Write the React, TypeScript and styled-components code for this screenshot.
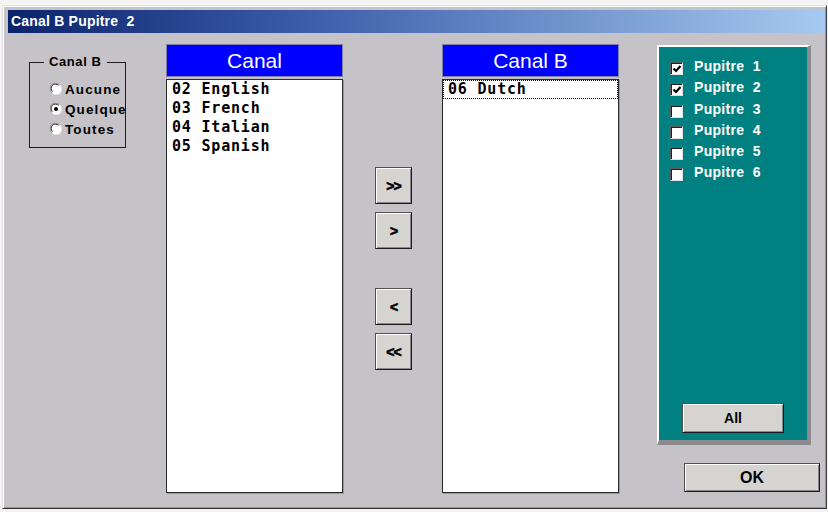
import React, { useState } from "react";
import styled, { createGlobalStyle } from "styled-components";

const GlobalStyle = createGlobalStyle`
  html, body {
    margin: 0;
    padding: 0;
    background: #f4f4f2;
  }
  * {
    box-sizing: border-box;
  }
`;

const sourceChannels = ["02 English", "03 French", "04 Italian", "05 Spanish"];
const targetChannels = ["06 Dutch"];
const modes = ["Aucune", "Quelque", "Toutes"];
const desks = [1, 2, 3, 4, 5, 6];

const Radio: React.FC<{ checked?: boolean }> = ({ checked }) => (
  <svg width="12" height="12" viewBox="0 0 12 12">
    <circle cx="6" cy="6" r="5.5" fill="#fff" />
    <path d="M1.6 9.4 A5 5 0 0 1 9.4 1.6" fill="none" stroke="#808080" strokeWidth="1" />
    <path d="M2.4 8.6 A4 4 0 0 1 8.6 2.4" fill="none" stroke="#303030" strokeWidth="1" />
    <path d="M10.4 2.6 A5 5 0 0 1 2.6 10.4" fill="none" stroke="#e8e8e8" strokeWidth="1" />
    {checked && <circle cx="6" cy="6" r="2" fill="#000" />}
  </svg>
);

const App: React.FC = () => {
  const [mode, setMode] = useState("Quelque");
  const [checked, setChecked] = useState<number[]>([1, 2]);

  const toggleDesk = (n: number) => {
    setChecked((prev) => (prev.includes(n) ? prev.filter((d) => d !== n) : [...prev, n]));
  };

  return (
    <>
      <GlobalStyle />
      <Window>
        <TitleBar>Canal B Pupitre  2</TitleBar>
        <Body>
          <GroupBox>
            <GroupLegend>Canal B</GroupLegend>
            <RadioList>
              {modes.map((m) => (
                <RadioRow key={m} onClick={() => setMode(m)}>
                  <Radio checked={mode === m} />
                  <span>{m}</span>
                </RadioRow>
              ))}
            </RadioList>
          </GroupBox>

          <ChannelColumn $first>
            <ChannelHeader>Canal</ChannelHeader>
            <ChannelList>
              {sourceChannels.map((c) => (
                <ChannelItem key={c}>{c}</ChannelItem>
              ))}
            </ChannelList>
          </ChannelColumn>

          <MoveColumn>
            <MoveButton>&gt;&gt;</MoveButton>
            <MoveButton>&gt;</MoveButton>
            <MoveButton $spaced>&lt;</MoveButton>
            <MoveButton>&lt;&lt;</MoveButton>
          </MoveColumn>

          <ChannelColumn>
            <ChannelHeader>Canal B</ChannelHeader>
            <ChannelList>
              {targetChannels.map((c) => (
                <ChannelItem key={c} $focused>
                  {c}
                </ChannelItem>
              ))}
            </ChannelList>
          </ChannelColumn>

          <RightColumn>
            <DeskPanel>
              <DeskList>
                {desks.map((n) => (
                  <DeskRow key={n} onClick={() => toggleDesk(n)}>
                    <CheckBox>
                      {checked.includes(n) && (
                        <svg width="10" height="10" viewBox="0 0 10 10">
                          <path d="M1.5 4.5 L4 7 L8.5 2" fill="none" stroke="#000" strokeWidth="2.2" />
                        </svg>
                      )}
                    </CheckBox>
                    <DeskLabel>{`Pupitre  ${n}`}</DeskLabel>
                  </DeskRow>
                ))}
              </DeskList>
              <AllButton onClick={() => setChecked(desks)}>All</AllButton>
            </DeskPanel>
            <OkButton>OK</OkButton>
          </RightColumn>
        </Body>
      </Window>
    </>
  );
};

const Window = styled.div`
  margin: 5px 0 0 2px;
  width: 825px;
  height: 504px;
  background: #c5c3c7;
  border: 1px solid;
  border-color: #e2e0e4 #404040 #303030 #e2e0e4;
  box-shadow: inset 1px 1px #ffffff, inset -1px -1px #9a989c;
  padding: 4px 1px 2px 5px;
  display: flex;
  flex-direction: column;
`;

const TitleBar = styled.div`
  height: 23px;
  line-height: 23px;
  padding-left: 3px;
  background: linear-gradient(to right, #0a246a 0%, #3a5aa8 35%, #a6caf0 100%);
  color: #fff;
  font-family: "Liberation Sans", Arial, sans-serif;
  font-weight: bold;
  font-size: 14px;
  letter-spacing: 0.2px;
  white-space: pre;
`;

const Body = styled.div`
  display: flex;
  align-items: flex-start;
  flex: 1;
`;

const GroupBox = styled.fieldset`
  margin: 22px 0 0 21px;
  width: 97px;
  height: 93px;
  padding: 0;
  border: 1px solid #1c1c1c;
  min-width: 0;
`;

const GroupLegend = styled.legend`
  margin-left: 14px;
  padding: 0 5px;
  font-family: "Liberation Sans", Arial, sans-serif;
  font-weight: bold;
  font-size: 13px;
  line-height: 14px;
  letter-spacing: 0.6px;
  color: #000;
`;

const RadioList = styled.div`
  margin-top: 10px;
  padding-left: 20px;
  overflow: hidden;
  white-space: nowrap;
`;

const RadioRow = styled.div`
  display: flex;
  align-items: center;
  gap: 3px;
  height: 20px;
  font-family: "Liberation Sans", Arial, sans-serif;
  font-weight: bold;
  font-size: 13.5px;
  letter-spacing: 1.1px;
  color: #000;
  cursor: default;

  svg {
    flex-shrink: 0;
  }
`;

const ChannelColumn = styled.div<{ $first?: boolean }>`
  margin: 11px 0 0 ${(p) => (p.$first ? 40 : 30)}px;
  width: 177px;
  display: flex;
  flex-direction: column;
  gap: 2px;
`;

const ChannelHeader = styled.div`
  height: 33px;
  line-height: 31px;
  background: #0000ff;
  border: 1px solid #8080a8;
  color: #fff;
  text-align: center;
  font-family: "Liberation Sans", Arial, sans-serif;
  font-size: 21px;
`;

const ChannelList = styled.div`
  height: 414px;
  background: #fff;
  border: 1px solid #2a2a2a;
  box-shadow: 1px 1px 0 #9a989c;
`;

const ChannelItem = styled.div<{ $focused?: boolean }>`
  height: 19px;
  line-height: 19px;
  padding-left: 5px;
  font-family: "DejaVu Sans Mono", "Liberation Mono", monospace;
  font-weight: bold;
  font-size: 15px;
  letter-spacing: 0.8px;
  color: #000;
  white-space: pre;
  outline: ${(p) => (p.$focused ? "1px dotted #000" : "none")};
  outline-offset: -1px;
`;

const raised = `
  background: #d6d4d0;
  border: 1px solid;
  border-color: #505050 #1a1a1a #1a1a1a #505050;
  box-shadow: inset 1px 1px #ffffff, inset -1px -1px #8a888c;
  font-family: "Liberation Sans", Arial, sans-serif;
  font-weight: bold;
  color: #000;
  padding: 0;
  cursor: pointer;
`;

const MoveColumn = styled.div`
  margin: 134px 0 0 32px;
  width: 37px;
  display: flex;
  flex-direction: column;
  gap: 8px;
`;

const MoveButton = styled.button<{ $spaced?: boolean }>`
  ${raised}
  width: 37px;
  height: 37px;
  font-size: 14px;
  letter-spacing: -1px;
  -webkit-text-stroke: 0.6px #000;
  margin-top: ${(p) => (p.$spaced ? 31 : 0)}px;
`;

const RightColumn = styled.div`
  margin: 12px 0 0 38px;
  width: 163px;
  display: flex;
  flex-direction: column;
`;

const DeskPanel = styled.div`
  width: 154px;
  height: 400px;
  background: #008080;
  border-style: solid;
  border-width: 2px 4px 5px 2px;
  border-color: #ffffff #8c8a8e #8c8a8e #ffffff;
  padding: 15px 0 7px 11px;
  display: flex;
  flex-direction: column;
`;

const DeskList = styled.div`
  flex: 1;
  display: flex;
  flex-direction: column;
`;

const DeskRow = styled.div`
  height: 21.25px;
  display: flex;
  align-items: flex-start;
  gap: 11px;
  cursor: default;
`;

const CheckBox = styled.span`
  width: 13px;
  height: 13px;
  background: #fff;
  border: 1px solid;
  border-color: #5a5a5a #e0e0e0 #e0e0e0 #5a5a5a;
  box-shadow: inset 1px 1px #202020;
  display: flex;
  align-items: center;
  justify-content: center;
  padding: 1px 0 0 1px;
`;

const DeskLabel = styled.span`
  margin-top: -4px;
  font-family: "Liberation Sans", Arial, sans-serif;
  font-weight: bold;
  font-size: 14px;
  letter-spacing: 0.3px;
  line-height: 17px;
  color: #fff;
  white-space: pre;
`;

const AllButton = styled.button`
  ${raised}
  align-self: center;
  margin-left: -11px;
  width: 102px;
  height: 30px;
  font-size: 14px;
`;

const OkButton = styled.button`
  ${raised}
  align-self: flex-end;
  margin-top: 18px;
  width: 136px;
  height: 29px;
  font-size: 16px;
`;

export default App;
